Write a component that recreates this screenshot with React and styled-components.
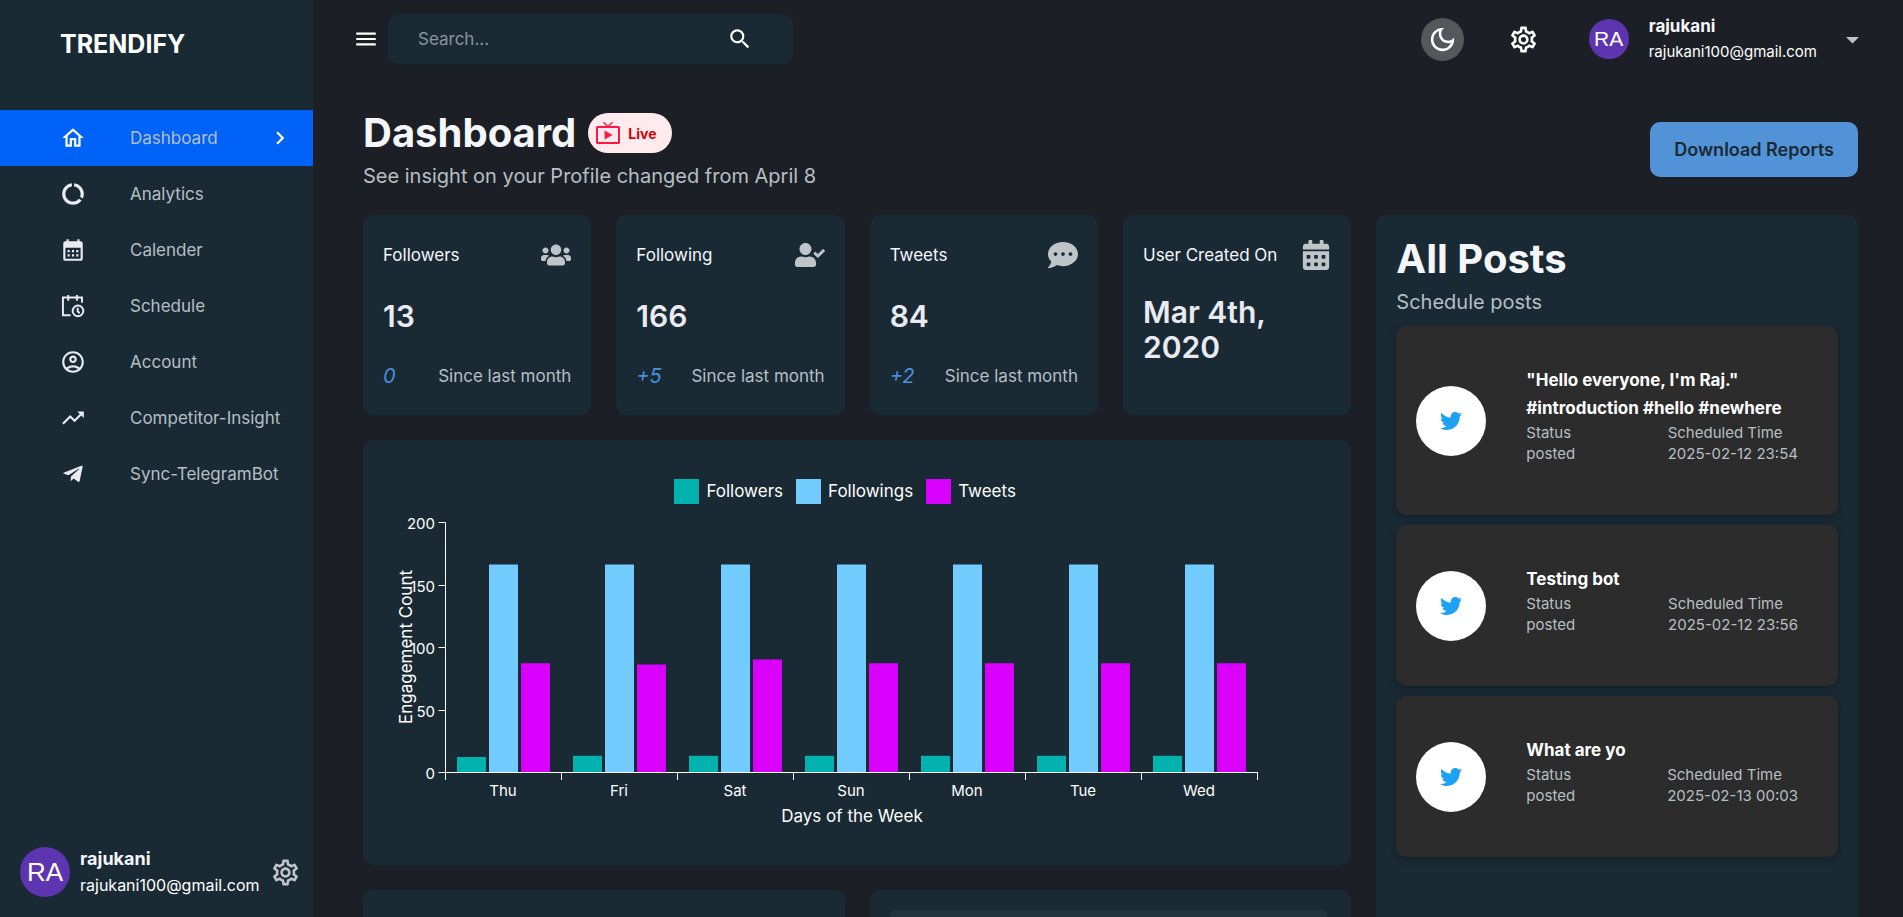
import React from "react";
import styled, { createGlobalStyle } from "styled-components";
import {
  MdOutlineHome,
  MdDataUsage,
  MdCalendarMonth,
  MdOutlineAccountCircle,
  MdTrendingUp,
  MdChevronRight,
  MdMenu,
  MdSearch,
  MdOutlineDarkMode,
  MdOutlineSettings,
  MdArrowDropDown,
} from "react-icons/md";
import {
  FaTelegramPlane,
  FaUsers,
  FaUserCheck,
  FaCommentDots,
  FaCalendarAlt,
  FaTwitter,
} from "react-icons/fa";

const color = {
  page: "#1c1f26",
  panel: "#192a35",
  post: "#2c2c2c",
  active: "#0062f7",
  accent: "#5292d6",
  bright: "#f5f6fa",
  icon: "#e9ebf1",
  soft: "#b6bfc2",
  muted: "#bfc4c8",
};

const GlobalStyle = createGlobalStyle`
  * { box-sizing: border-box; }
  body {
    margin: 0;
    background: ${color.page};
    color: #fff;
    font-family: Inter, "Liberation Sans", sans-serif;
    font-size: 17px;
  }
  button { font: inherit; color: inherit; background: none; border: 0; padding: 0; cursor: pointer; }
  h1, h2, h3, p, ul, dl, dt, dd { margin: 0; padding: 0; }
  svg { display: block; flex: none; }
`;

const Shell = styled.div`
  display: flex;
  height: 100vh;
  overflow: hidden;
`;

const Sidebar = styled.aside`
  display: flex;
  flex-direction: column;
  flex: 0 0 313px;
  background: ${color.panel};
`;

const Brand = styled.h2`
  padding: 29px 60px 51px;
  font-size: 25px;
  line-height: 30px;
  font-weight: 700;
`;

const NavList = styled.ul`
  list-style: none;
`;

const NavLink = styled.a`
  display: flex;
  align-items: center;
  height: 56px;
  padding: 0 20px 0 60px;
  color: ${color.soft};
  background: ${(p) => (p.$active ? color.active : "transparent")};
  text-decoration: none;
  white-space: nowrap;

  svg { color: ${(p) => (p.$active ? "#fff" : color.icon)}; }
  > svg { margin-left: auto; }
`;

const NavIcon = styled.span`
  display: grid;
  place-items: center;
  width: 26px;
  height: 26px;
  margin-right: 44px;
`;

const SidebarUser = styled.div`
  display: flex;
  align-items: center;
  gap: 10px;
  margin-top: auto;
  padding: 0 12px 19px 20px;

  > button { margin-left: auto; color: ${color.muted}; }
`;

const Avatar = styled.span`
  display: grid;
  place-items: center;
  flex: none;
  width: ${(p) => p.$size}px;
  height: ${(p) => p.$size}px;
  border-radius: 50%;
  background: #5e35b1;
  color: #fff;
  font-family: "Liberation Sans", sans-serif;
  font-size: ${(p) => p.$font}px;
`;

const Identity = styled.span`
  display: flex;
  flex-direction: column;
  text-align: left;
  white-space: nowrap;
  font-size: ${(p) => (p.$compact ? 15 : 16)}px;
  line-height: ${(p) => (p.$compact ? 25 : 26)}px;

  strong { font-size: ${(p) => (p.$compact ? 17 : 18)}px; color: ${color.bright}; }
`;

const Main = styled.div`
  flex: 1;
  min-width: 0;
  overflow-y: auto;
  scrollbar-width: none;
`;

const Topbar = styled.header`
  display: flex;
  justify-content: space-between;
  align-items: center;
  height: 78px;
  padding: 0 35px 0 40px;
`;

const Cluster = styled.div`
  display: flex;
  align-items: center;
`;

const Actions = styled(Cluster)`
  gap: 38px;
`;

const SearchBox = styled.label`
  display: flex;
  align-items: center;
  width: 405px;
  height: 50px;
  margin-left: 9px;
  padding: 0 40px 0 30px;
  border-radius: 10px;
  background: ${color.panel};

  input {
    flex: 1;
    min-width: 0;
    padding: 0;
    border: 0;
    outline: 0;
    background: none;
    color: #fff;
    font: inherit;
  }
  input::placeholder { color: #8a9499; opacity: 1; }
`;

const RoundButton = styled.button`
  display: grid;
  place-items: center;
  width: 43px;
  height: 43px;
  border-radius: 50%;
  background: ${(p) => (p.$filled ? "#55575c" : "transparent")};
`;

const AccountButton = styled.button`
  display: flex;
  align-items: center;
  gap: 20px;
  padding-left: 6px;

  > svg { color: ${color.muted}; }
`;

const Content = styled.main`
  padding: 31px 45px 40px 50px;
`;

const PageHead = styled.div`
  display: flex;
  justify-content: space-between;
  align-items: center;
  margin-bottom: 25px;
`;

const TitleRow = styled.div`
  display: flex;
  align-items: center;
  gap: 12px;
`;

const Title = styled.h1`
  color: ${color.bright};
  font-size: 40px;
  line-height: 48px;
  font-weight: 700;
`;

const Subtitle = styled.p`
  margin-top: 5px;
  color: ${color.soft};
  font-size: 20px;
  line-height: 28px;
`;

const LivePill = styled.span`
  display: flex;
  align-items: center;
  gap: 8px;
  height: 40px;
  padding: 0 15px 0 8px;
  border-radius: 20px;
  background: #ffebee;
  color: #d50000;
  font-size: 14px;
  font-weight: 700;
`;

const DownloadButton = styled.button`
  height: 55px;
  padding: 0 24px;
  border-radius: 10px;
  background: ${color.accent};
  color: ${color.panel};
  font-size: 18px;
  font-weight: 600;
`;

const Grid = styled.div`
  display: grid;
  grid-template-columns: repeat(12, minmax(0, 1fr));
  grid-auto-rows: 200px;
  gap: 25px;
`;

const Panel = styled.section`
  grid-column: span ${(p) => p.$cols};
  grid-row: span ${(p) => p.$rows || 1};
  display: flex;
  flex-direction: column;
  padding: ${(p) => p.$pad || "20px"};
  border-radius: 10px;
  background: ${color.panel};
`;

const StatHead = styled.div`
  display: flex;
  justify-content: space-between;
  align-items: center;
  height: 30px;
  color: ${color.bright};
  white-space: nowrap;

  svg { color: ${color.muted}; }
`;

const StatValue = styled.p`
  margin: auto 0;
  color: ${color.icon};
  font-size: 30px;
  line-height: 35px;
  font-weight: 600;
`;

const StatFoot = styled.div`
  display: flex;
  justify-content: space-between;
  align-items: center;
  height: 28px;
  color: ${color.soft};
  white-space: nowrap;

  em { color: #4a8fdc; font-size: 20px; }
`;

const Legend = styled.ul`
  display: flex;
  justify-content: center;
  align-items: center;
  gap: 13px;
  height: 62px;
  padding-right: 24px;
  list-style: none;

  li { display: flex; align-items: center; gap: 7px; }
`;

const Swatch = styled.span`
  width: 25px;
  height: 25px;
  background: ${(p) => p.$fill};
`;

const Chart = styled.svg`
  width: 100%;
  height: 323px;
  overflow: visible;

  text { fill: #fff; font-size: 17px; }
  .tick { font-size: 15px; }
  path { stroke: #fff; fill: none; }
`;

const PostList = styled.div`
  display: flex;
  flex-direction: column;
  gap: 10px;
  margin-top: 10px;
`;

const Post = styled.article`
  display: flex;
  align-items: center;
  gap: 40px;
  padding: 40px 40px 40px 20px;
  border-radius: 10px;
  background: ${color.post};
  box-shadow: 0 2px 6px rgba(0, 0, 0, 0.3);
`;

const PostBadge = styled.span`
  display: grid;
  place-items: center;
  flex: none;
  width: 70px;
  height: 70px;
  border-radius: 50%;
  background: #fff;
  color: #1da1f2;
`;

const PostBody = styled.div`
  flex: 1;
  min-width: 0;
  padding-bottom: 10px;

  h3 { font-size: 17px; line-height: 28px; font-weight: 700; white-space: pre-line; }
`;

const PostFacts = styled.dl`
  display: flex;
  justify-content: space-between;
  color: ${color.soft};
  font-size: 15px;
  line-height: 21px;

  dd { line-height: 22px; }
`;

const Placeholder = styled.div`
  flex: 1;
  margin-right: 4px;
  border-radius: 4px;
  background: #23333d;
`;

const ScheduleIcon = ({ size }) => (
  <svg width={size} height={size} viewBox="0 0 24 24" fill="none" stroke="currentColor" strokeWidth="1.8">
    <path d="M9.8 20.5H2.7V4.2H20.3v4.8M7.6 1.8v5.4M15.6 1.8v5.4" />
    <circle cx="16.6" cy="16.5" r="4.9" />
    <path d="M16.3 13.6v3.3l1.9 1.7" />
  </svg>
);

const LiveIcon = () => (
  <svg width="24" height="24" viewBox="0 0 24 24" fill="none" stroke="#ff1744">
    <path d="M7.5 1.2l4.5 4.3 4.5-4.3" strokeWidth="1.3" />
    <rect x="1" y="6" width="22" height="16" rx="0.6" strokeWidth="2" />
    <path d="M8.6 9.5v9l8-4.5z" fill="#ff1744" stroke="none" />
  </svg>
);

const navItems = [
  { label: "Dashboard", Icon: MdOutlineHome, active: true },
  { label: "Analytics", Icon: MdDataUsage },
  { label: "Calender", Icon: MdCalendarMonth },
  { label: "Schedule", Icon: ScheduleIcon },
  { label: "Account", Icon: MdOutlineAccountCircle },
  { label: "Competitor-Insight", Icon: MdTrendingUp },
  { label: "Sync-TelegramBot", Icon: FaTelegramPlane, size: 22 },
];

const stats = [
  { title: "Followers", value: "13", delta: "0", Icon: FaUsers },
  { title: "Following", value: "166", delta: "+5", Icon: FaUserCheck },
  { title: "Tweets", value: "84", delta: "+2", Icon: FaCommentDots },
  { title: "User Created On", value: "Mar 4th, 2020", Icon: FaCalendarAlt },
];

const series = [
  { name: "Followers", fill: "#02b2af" },
  { name: "Followings", fill: "#72ccff" },
  { name: "Tweets", fill: "#da00ff" },
];

const week = [
  { day: "Thu", values: [12, 166, 87] },
  { day: "Fri", values: [13, 166, 86] },
  { day: "Sat", values: [13, 166, 90] },
  { day: "Sun", values: [13, 166, 87] },
  { day: "Mon", values: [13, 166, 87] },
  { day: "Tue", values: [13, 166, 87] },
  { day: "Wed", values: [13, 166, 87] },
];

const posts = [
  { text: '"Hello everyone, I\'m Raj."\n#introduction #hello #newhere', time: "2025-02-12 23:54" },
  { text: "Testing bot", time: "2025-02-12 23:56" },
  { text: "What are yo", time: "2025-02-13 00:03" },
];

function EngagementChart() {
  const left = 62;
  const base = 250;
  const step = 116;
  const unit = 1.25;
  return (
    <Chart viewBox="0 0 948 323" preserveAspectRatio="xMinYMin meet" role="img" aria-label="Engagement by day">
      {week.map((d, i) =>
        d.values.map((v, s) => (
          <rect
            key={d.day + s}
            x={left + i * step + 12 + s * 32}
            y={base - v * unit}
            width="29"
            height={v * unit}
            fill={series[s].fill}
          />
        ))
      )}
      <path d={`M${left + 0.5} 0.5V${base + 0.5}H${left + step * 7 + 0.5}`} />
      {[0, 50, 100, 150, 200].map((t) => {
        const y = Math.round(base - t * unit) + 0.5;
        return (
          <g key={t}>
            <path d={`M${left + 0.5} ${y}h-7`} />
            <text className="tick" x={left - 10} y={y + 6} textAnchor="end">{t}</text>
          </g>
        );
      })}
      {[0, 1, 2, 3, 4, 5, 6, 7].map((i) => (
        <path key={i} d={`M${left + i * step + 0.5} ${base}v8`} />
      ))}
      {week.map((d, i) => (
        <text className="tick" key={d.day} x={left + (i + 0.5) * step} y={base + 24} textAnchor="middle">
          {d.day}
        </text>
      ))}
      <text x={left + step * 3.5 + 1} y={base + 50} textAnchor="middle">Days of the Week</text>
      <text transform="translate(29 125) rotate(-90)" textAnchor="middle">Engagement Count</text>
    </Chart>
  );
}

export default function App() {
  return (
    <>
      <GlobalStyle />
      <Shell>
        <Sidebar>
          <Brand>TRENDIFY</Brand>
          <nav>
            <NavList>
              {navItems.map(({ label, Icon, active, size = 26 }) => (
                <li key={label}>
                  <NavLink href="#" $active={active}>
                    <NavIcon>
                      <Icon size={size} />
                    </NavIcon>
                    {label}
                    {active && <MdChevronRight size={26} />}
                  </NavLink>
                </li>
              ))}
            </NavList>
          </nav>
          <SidebarUser>
            <Avatar $size={50} $font={26}>RA</Avatar>
            <Identity>
              <strong>rajukani</strong>
              rajukani100@gmail.com
            </Identity>
            <button type="button" aria-label="Settings">
              <MdOutlineSettings size={31} />
            </button>
          </SidebarUser>
        </Sidebar>

        <Main>
          <Topbar>
            <Cluster>
              <button type="button" aria-label="Toggle menu">
                <MdMenu size={26} />
              </button>
              <SearchBox>
                <input type="text" placeholder="Search..." aria-label="Search" />
                <MdSearch size={26} />
              </SearchBox>
            </Cluster>
            <Actions>
              <RoundButton type="button" aria-label="Toggle theme" $filled>
                <MdOutlineDarkMode size={31} />
              </RoundButton>
              <RoundButton type="button" aria-label="Settings">
                <MdOutlineSettings size={31} />
              </RoundButton>
              <AccountButton type="button">
                <Avatar $size={40} $font={21}>RA</Avatar>
                <Identity $compact>
                  <strong>rajukani</strong>
                  rajukani100@gmail.com
                </Identity>
                <MdArrowDropDown size={31} />
              </AccountButton>
            </Actions>
          </Topbar>

          <Content>
            <PageHead>
              <div>
                <TitleRow>
                  <Title>Dashboard</Title>
                  <LivePill>
                    <LiveIcon />
                    Live
                  </LivePill>
                </TitleRow>
                <Subtitle>See insight on your Profile changed from April 8</Subtitle>
              </div>
              <DownloadButton type="button">Download Reports</DownloadButton>
            </PageHead>

            <Grid>
              {stats.map(({ title, value, delta, Icon }) => (
                <Panel key={title} $cols={2} $pad="25px 20px">
                  <StatHead>
                    {title}
                    <Icon size={30} />
                  </StatHead>
                  <StatValue>{value}</StatValue>
                  {delta && (
                    <StatFoot>
                      <em>{delta}</em>
                      Since last month
                    </StatFoot>
                  )}
                </Panel>
              ))}

              <Panel $cols={4} $rows={5}>
                <Title as="h2">All Posts</Title>
                <Subtitle>Schedule posts</Subtitle>
                <PostList>
                  {posts.map((post) => (
                    <Post key={post.time}>
                      <PostBadge>
                        <FaTwitter size={22} />
                      </PostBadge>
                      <PostBody>
                        <h3>{post.text}</h3>
                        <PostFacts>
                          <div>
                            <dt>Status</dt>
                            <dd>posted</dd>
                          </div>
                          <div>
                            <dt>Scheduled Time</dt>
                            <dd>{post.time}</dd>
                          </div>
                        </PostFacts>
                      </PostBody>
                    </Post>
                  ))}
                </PostList>
              </Panel>

              <Panel $cols={8} $rows={2}>
                <Legend>
                  {series.map((s) => (
                    <li key={s.name}>
                      <Swatch $fill={s.fill} />
                      {s.name}
                    </li>
                  ))}
                </Legend>
                <EngagementChart />
              </Panel>

              <Panel $cols={4} $rows={2} />
              <Panel $cols={4} $rows={2}>
                <Placeholder />
              </Panel>
            </Grid>
          </Content>
        </Main>
      </Shell>
    </>
  );
}
